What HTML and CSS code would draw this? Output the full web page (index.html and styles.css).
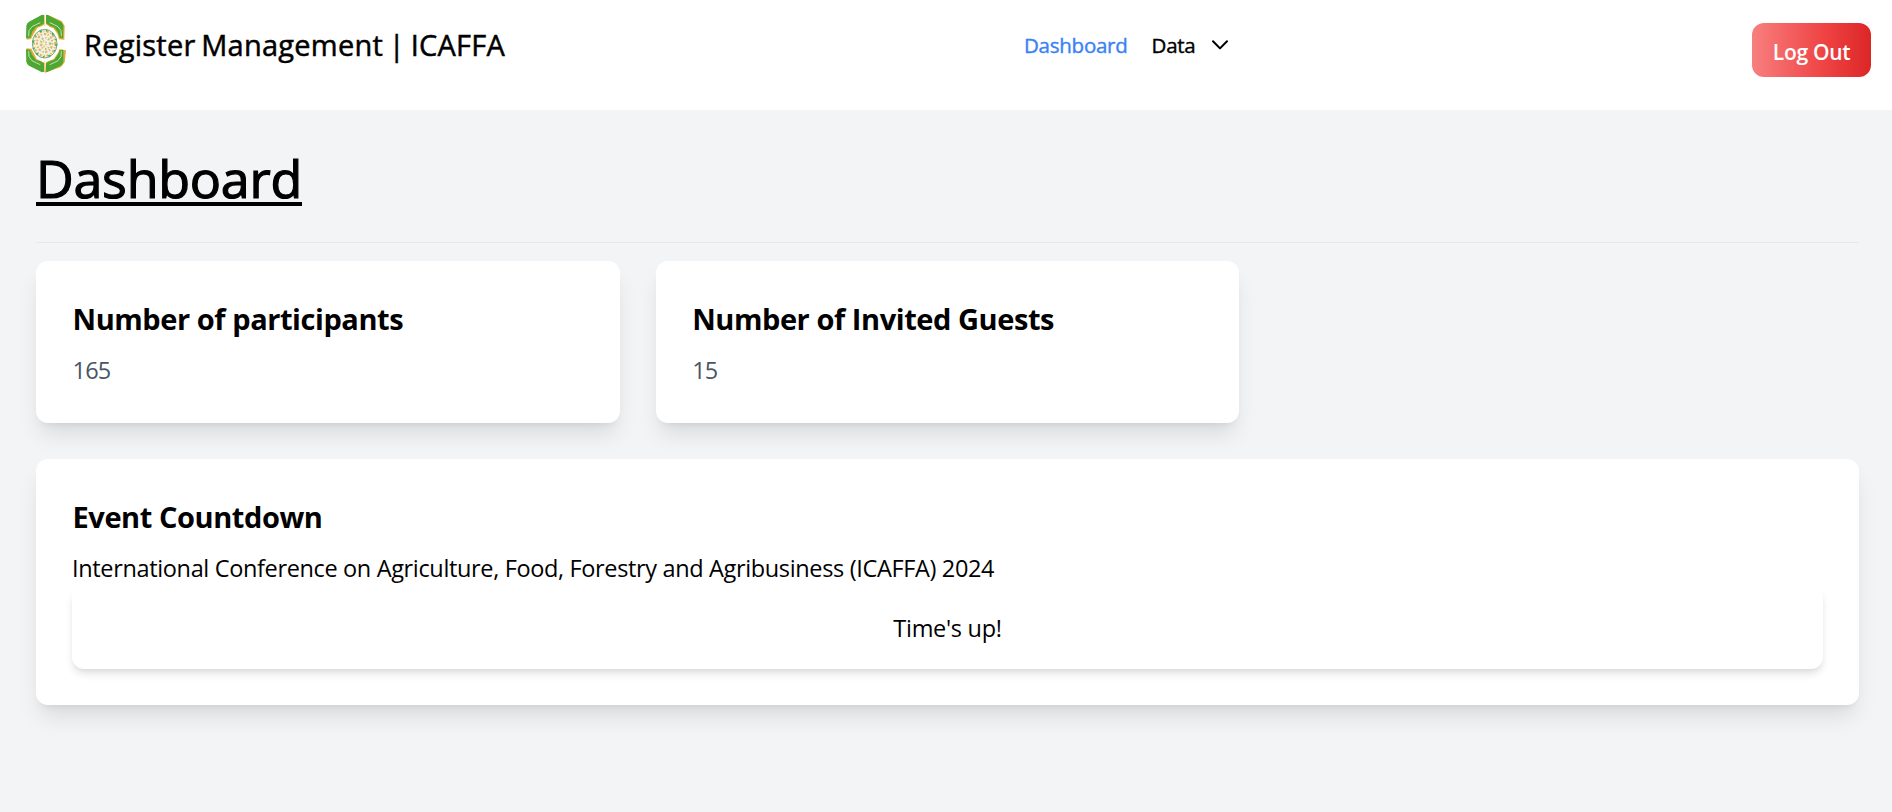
FILE: index.html
```html
<!DOCTYPE html>
<html lang="en">
<head>
<meta charset="utf-8">
<title>Register Management | ICAFFA</title>
<link rel="stylesheet" href="styles.css">
</head>
<body>
<header class="navbar">
  <a class="brand">
    <svg class="logo" viewBox="45 24 126 183" aria-hidden="true">
      <g>
        <path d="M105 32 L105 58 Q94 66 83 68 L74 82 L63 102 L50 104 L50 95 L60 51 L98 30 Z" fill="#e3ac35"/>
        <path d="M102 30 L102 55 Q92 63 78 66 L67 80 L61 98 L48 100 L49 62 Q50 55 57 50 L96 29 Z" fill="#4ca832"/>
        <path d="M56 94 L57 77 Q64 62 80 58 L91 53" fill="none" stroke="#e3edc0" stroke-width="2.5"/>
      </g>
      <g transform="translate(210 0) scale(-1 1)">
        <path d="M102 34 L102 58 Q92 67 80 70 L68 86 L63 103 L47 104 L46 63 L55 48 L96 30 Z" fill="#e3ac35"/>
        <path d="M102 30 L102 55 Q92 63 78 66 L67 80 L61 98 L51 100 L50 62 Q51 55 58 50 L98 29 Z" fill="#4ca832"/>
        <path d="M56 94 L57 77 Q64 62 80 58 L91 53" fill="none" stroke="#e3edc0" stroke-width="2.5"/>
      </g>
      <g transform="translate(0 232) scale(1 -1)">
        <path d="M107 29 L105 58 L80 70 L65 101 L50 102 L50 62 L59 50 Z" fill="#e3ac35"/>
        <path d="M102 32 L102 57 Q92 65 78 67 L67 82 L60 97 L48 99 L49 62 Q50 55 57 50 L96 30 Z" fill="#4ca832"/>
        <path d="M56 94 L57 77 Q64 62 80 58 L91 53" fill="none" stroke="#d5edc4" stroke-width="2.5"/>
      </g>
      <g transform="translate(210 232) scale(-1 -1)">
        <path d="M105 29 L102 60 L78 71 L65 90 L63 99 L42 96 L46 60 L57 46 Z" fill="#e3ac35"/>
        <path d="M102 32 L102 57 Q92 65 78 67 L67 82 L60 97 L50 98 L50 62 Q51 55 58 50 L98 31 Z" fill="#4ca832"/>
        <path d="M56 94 L57 77 Q64 62 80 58 L91 53" fill="none" stroke="#d5edc4" stroke-width="2.5"/>
      </g>
      <path d="M104.5 32 V64 M104.5 168 V200" stroke="#f4dda5" stroke-width="3"/>
      <ellipse cx="104" cy="116" rx="41" ry="46" fill="#fff"/>
      <ellipse cx="104" cy="116" rx="37" ry="43" fill="#f4efdd" stroke="#5a9b68" stroke-width="2.5"/>
      <g fill="none" stroke-width="6">
        <ellipse cx="104" cy="116" rx="32" ry="37" stroke="#d9b55f" stroke-dasharray="6 5 3 7"/>
        <ellipse cx="104" cy="116" rx="35" ry="40" stroke="#4ca86a" stroke-dasharray="7 13 4 16"/>
        <ellipse cx="104" cy="114" rx="23" ry="27" stroke="#d3b76c" stroke-dasharray="4 6 7 4"/>
        <ellipse cx="106" cy="115" rx="14" ry="17" stroke="#b5bf83" stroke-dasharray="5 7 3 5"/>
        <ellipse cx="101" cy="116" rx="7" ry="8" stroke="#e4c274" stroke-dasharray="4 4"/>
      </g>
    </svg>
    <span class="brand-name">Register Management | ICAFFA</span>
  </a>
  <nav class="menu">
    <a class="menu-link active">Dashboard</a>
    <a class="menu-link">Data
      <svg class="chevron" viewBox="0 0 18 12" aria-hidden="true"><path d="M2 2.2 L9 9.4 L16 2.2"/></svg>
    </a>
  </nav>
  <button class="logout">Log Out</button>
</header>
<main class="content">
  <h1 class="page-title">Dashboard</h1>
  <hr class="divider">
  <section class="stats">
    <article class="card">
      <h2 class="card-title">Number of participants</h2>
      <p class="card-value">165</p>
    </article>
    <article class="card">
      <h2 class="card-title">Number of Invited Guests</h2>
      <p class="card-value">15</p>
    </article>
  </section>
  <section class="card event">
    <h2 class="card-title">Event Countdown</h2>
    <p class="event-name">International Conference on Agriculture, Food, Forestry and Agribusiness (ICAFFA) 2024</p>
    <div class="countdown">Time's up!</div>
  </section>
</main>
</body>
</html>
```
FILE: styles.css
```css
* { box-sizing: border-box; margin: 0; }
body {
  min-height: 812px;
  background: #f3f4f6;
  color: #000;
  font-family: "Segoe UI", "Open Sans", "Noto Sans", sans-serif;
  font-size: 23.5px;
  line-height: 36px;
}
.navbar {
  display: grid;
  grid-template-columns: 1024px 1fr auto;
  align-items: start;
  height: 110px;
  padding-right: 21px;
  background: #fff;
}
.brand { display: flex; padding: 13px 0 0 25px; }
.logo { width: 42px; height: 61px; }
.brand-name {
  margin: 11px 0 0 17px;
  font-size: 29px;
  line-height: 42px;
  font-weight: 500;
  letter-spacing: 0.25px;
  word-spacing: -2.1px;
  white-space: nowrap;
  -webkit-text-stroke: 0.5px;
}
.menu {
  display: flex;
  gap: 24px;
  padding-top: 30px;
  font-size: 20.5px;
  line-height: 30px;
  font-weight: 500;
  letter-spacing: -0.25px;
  -webkit-text-stroke: 0.4px;
}
.menu-link { display: flex; align-items: center; }
.active { color: #3b82f6; }
.chevron {
  width: 18px;
  height: 12px;
  margin-left: 15px;
  fill: none;
  stroke: #000;
  stroke-width: 2;
  stroke-linecap: round;
  stroke-linejoin: round;
}
.logout {
  width: 119px;
  height: 54px;
  margin-top: 23px;
  padding: 3px 0 0;
  border: 0;
  border-radius: 12px;
  background: linear-gradient(to right, #f87f7f, #ef4444 60%, #dc2626);
  color: #fff;
  font: 600 21px/30px "Segoe UI", "Open Sans", sans-serif;
  letter-spacing: -0.3px;
}
.content { padding: 35px 33px 0 36px; }
.page-title {
  width: fit-content;
  font-size: 52px;
  line-height: 66px;
  font-weight: 500;
  letter-spacing: -0.26px;
  text-decoration: underline;
  text-decoration-thickness: 4px;
  text-underline-offset: 4px;
  text-decoration-skip-ink: none;
  -webkit-text-stroke: 1.2px;
}
.divider { height: 1px; margin: 31px 0 18px; border: 0; background: #e5e7eb; }
.stats { display: grid; grid-template-columns: repeat(3, 1fr); gap: 36px; }
.card {
  height: 162px;
  padding: 35px 36px 36px;
  border-radius: 12px;
  background: #fff;
  box-shadow: 0 15px 22.5px -4.5px rgba(0, 0, 0, 0.1), 0 6px 9px -6px rgba(0, 0, 0, 0.1);
}
.card-title { padding-left: 0.5px; font-size: 29px; line-height: 45px; font-weight: 700; letter-spacing: -0.43px; }
.card-value { margin-top: 11px; padding-left: 0.5px; color: #4b5563; letter-spacing: -0.75px; }
.event { height: 246px; margin-top: 36px; }
.event-name { margin-top: 11px; letter-spacing: -0.35px; white-space: nowrap; }
.countdown {
  height: 83px;
  padding-top: 24px;
  border-radius: 12px;
  background: #fff;
  text-align: center;
  letter-spacing: -0.3px;
  box-shadow: 0 6px 9px -1.5px rgba(0, 0, 0, 0.1), 0 3px 6px -3px rgba(0, 0, 0, 0.1);
}
```
